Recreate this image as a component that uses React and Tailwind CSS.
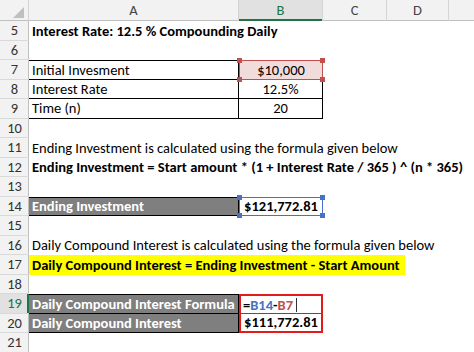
const grid = 'grid grid-cols-[29px_210px_84px_64px_62px_1fr]'

const Num = ({ n, active }) => (
  <div
    className={`flex items-center justify-center border-b border-[#d9d9d9] ${
      active
        ? 'bg-[#e1e1e1] text-[#217346] shadow-[inset_-2px_0_0_#217346]'
        : 'bg-[#f2f2f2] text-[#333] shadow-[inset_-1px_0_0_#bfbfbf]'
    }`}
  >
    {n}
  </div>
)

const Row = ({ n, active, children }) => (
  <div className={`${grid} h-[19.5px]`}>
    <Num n={n} active={active} />
    {children}
  </div>
)

const Handles = ({ color }) => (
  <>
    <span className={`absolute -left-[3px] -top-[3px] h-[5px] w-[5px] ${color}`} />
    <span className={`absolute -right-[3px] -top-[3px] h-[5px] w-[5px] ${color}`} />
    <span className={`absolute -left-[3px] -bottom-[3px] h-[5px] w-[5px] ${color}`} />
    <span className={`absolute -right-[3px] -bottom-[3px] h-[5px] w-[5px] ${color}`} />
  </>
)

const TextRow = ({ n, bold, children }) => (
  <Row n={n}>
    <div className={`col-span-5 flex items-center whitespace-nowrap pl-[3px] ${bold ? 'font-bold' : ''}`}>
      {children}
    </div>
  </Row>
)

export default function App() {
  return (
    <div
      className="h-[352px] w-[474px] overflow-hidden bg-white text-[14.5px] leading-none text-black"
      style={{ fontFamily: 'Carlito, Lato, sans-serif' }}
    >
      {/* column header */}
      <div className={`${grid} h-[21px] bg-[#f2f2f2] text-[#444] shadow-[inset_0_-1px_0_#bfbfbf]`}>
        <div className="relative border-r border-[#d4d4d4]">
          <span className="absolute bottom-[3px] right-[4px] h-0 w-0 border-b-[11px] border-l-[11px] border-b-[#bfbfbf] border-l-transparent" />
        </div>
        <div className="flex items-center justify-center border-r border-[#d4d4d4]">A</div>
        <div className="flex items-center justify-center border-r border-[#d4d4d4] bg-[#e1e1e1] text-[#217346] shadow-[inset_0_-2px_0_#217346]">
          B
        </div>
        <div className="flex items-center justify-center border-r border-[#d4d4d4]">C</div>
        <div className="flex items-center justify-center border-r border-[#d4d4d4]">D</div>
        <div />
      </div>

      <TextRow n={5} bold>Interest Rate: 12.5 % Compounding Daily</TextRow>
      <TextRow n={6} />

      <Row n={7}>
        <div className="flex items-center border-y border-r border-black pl-[3px]">Initial Invesment</div>
        <div className="relative flex items-center justify-center border border-[#c0504d] bg-[#f2dcdb]">
          $10,000
          <Handles color="bg-[#c0504d]" />
        </div>
      </Row>
      <Row n={8}>
        <div className="flex items-center border-b border-r border-black pl-[3px]">Interest Rate</div>
        <div className="flex items-center justify-center border-b border-r border-black">12.5%</div>
      </Row>
      <Row n={9}>
        <div className="flex items-center border-b border-r border-black pl-[3px]">Time (n)</div>
        <div className="flex items-center justify-center border-b border-r border-black">20</div>
      </Row>

      <TextRow n={10} />
      <TextRow n={11}>Ending Investment is calculated using the formula given below</TextRow>
      <TextRow n={12} bold>
        Ending Investment = Start amount * (1 + Interest Rate / 365 ) ^ (n * 365)
      </TextRow>
      <TextRow n={13} />

      <Row n={14}>
        <div className="flex items-center border border-l-0 border-black bg-[#7f7f7f] pl-[3px] font-bold text-white">
          Ending Investment
        </div>
        <div className="relative flex items-center justify-center border border-[#4472c4] font-bold">
          $121,772.81
          <Handles color="bg-[#4472c4]" />
        </div>
      </Row>

      <TextRow n={15} />
      <TextRow n={16}>Daily Compound Interest is calculated using the formula given below</TextRow>
      <Row n={17}>
        <div className="col-span-5 flex items-center whitespace-nowrap">
          <span className="flex h-full items-center bg-[#ffff00] pl-[3px] pr-[5px] font-bold">
            Daily Compound Interest = Ending Investment - Start Amount
          </span>
        </div>
      </Row>
      <TextRow n={18} />

      <Row n={19} active>
        <div className="flex items-center border-y border-r border-black bg-[#7f7f7f] pl-[3px] font-bold text-white">
          Daily Compound Interest Formula
        </div>
        <div className="flex items-center border-x-2 border-t-2 border-[#e31b1b] shadow-[inset_0_-1px_0_#217346] pl-[2px] font-bold">
          =<span className="text-[#4472c4]">B14</span>-<span className="text-[#c0504d]">B7</span>
          <span className="ml-[3px] h-[14px] w-px bg-[#333]" />
        </div>
      </Row>
      <Row n={20}>
        <div className="flex items-center border-b border-r border-black bg-[#7f7f7f] pl-[3px] font-bold text-white">
          Daily Compound Interest
        </div>
        <div className="flex items-center justify-center border-x-2 border-b-2 border-[#e31b1b] font-bold">
          $111,772.81
        </div>
      </Row>
      <TextRow n={21} />
    </div>
  )
}
